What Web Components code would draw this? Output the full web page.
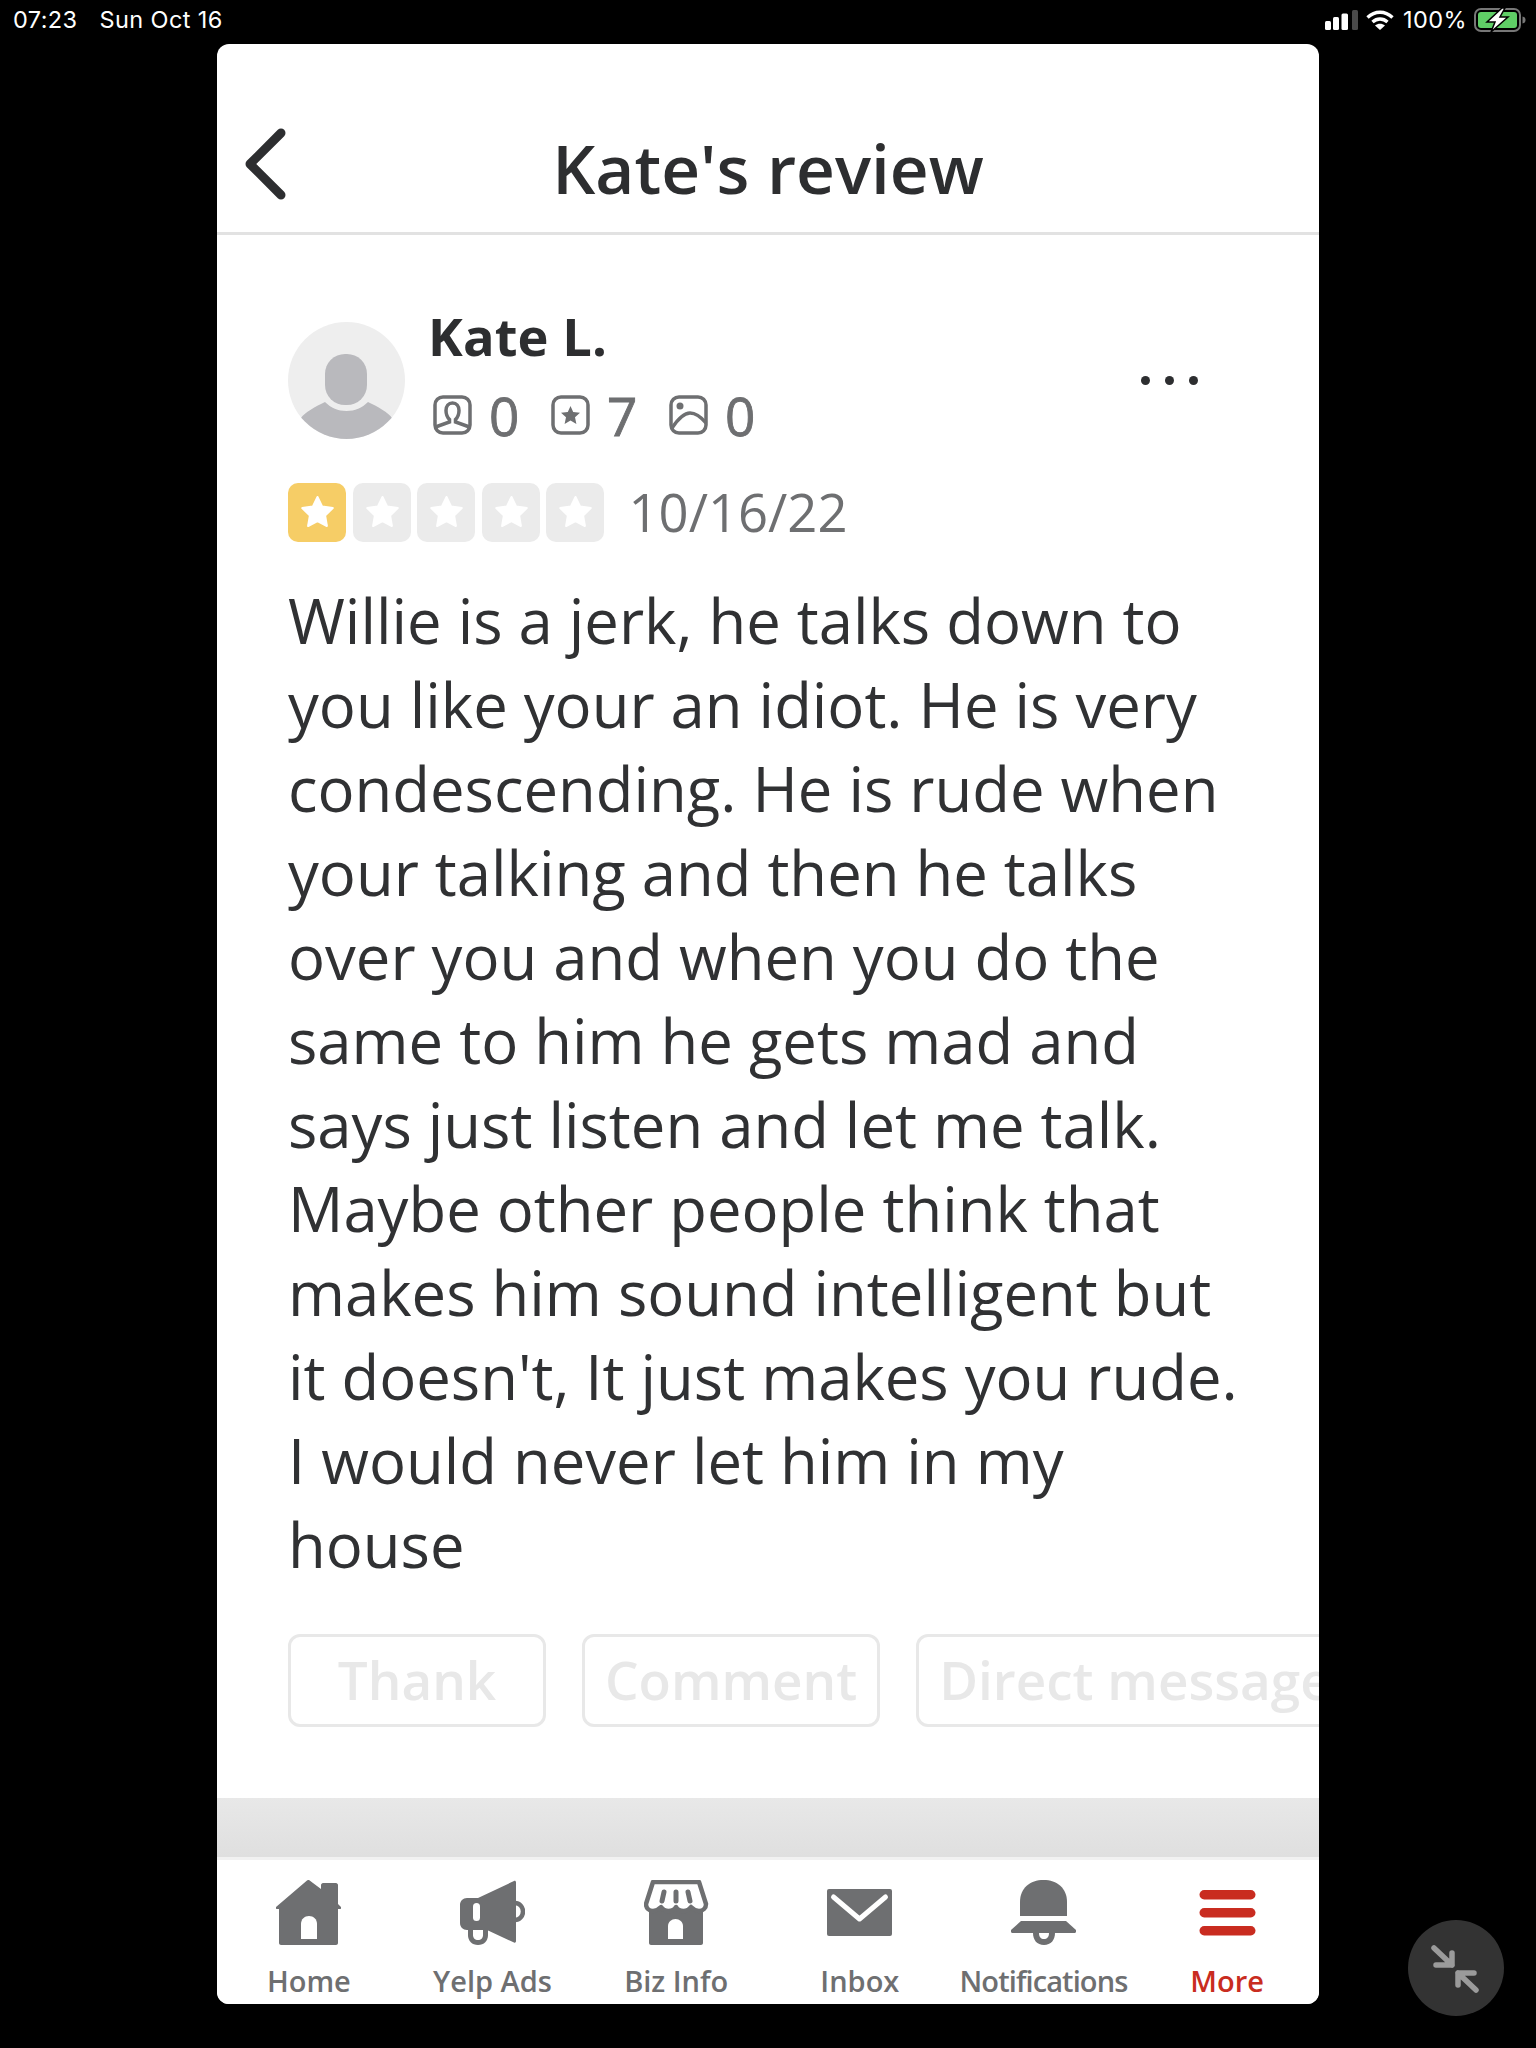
<!DOCTYPE html>
<html lang="en"><head><meta charset="utf-8"><title>Kate's review</title>
<style>
html,body{margin:0;background:#000;height:2048px;overflow:hidden}
body{font-family:"Open Sans",sans-serif;position:relative}
</style></head><body>
<app-shell>
  <status-bar slot="status"></status-bar>
  <review-header slot="card">Kate's review</review-header>
  <review-body slot="card">
    <reviewer-info name="Kate L."></reviewer-info>
    <star-rating date="10/16/22"></star-rating>
    <review-text>Willie is a jerk, he talks down to<br>you like your an idiot. He is very<br>condescending. He is rude when<br>your talking and then he talks<br>over you and when you do the<br>same to him he gets mad and<br>says just listen and let me talk.<br>Maybe other people think that<br>makes him sound intelligent but<br>it doesn't, It just makes you rude.<br>I would never let him in my<br>house</review-text>
    <action-row>
      <action-button style="min-width:258px">Thank</action-button>
      <action-button style="min-width:297px">Comment</action-button>
      <action-button>Direct message</action-button>
    </action-row>
  </review-body>
  <section-band slot="card"></section-band>
  <nav-bar slot="card">
    <nav-item label="Home" icon="home"></nav-item>
    <nav-item label="Yelp Ads" icon="ads"></nav-item>
    <nav-item label="Biz Info" icon="biz"></nav-item>
    <nav-item label="Inbox" icon="inbox"></nav-item>
    <nav-item label="Notifications" icon="bell"></nav-item>
    <nav-item label="More" icon="more" active></nav-item>
  </nav-bar>
</app-shell>
<float-button></float-button>
<script>
function def(name, html){
  customElements.define(name, class extends HTMLElement{
    constructor(){super();this.attachShadow({mode:'open'});}
    connectedCallback(){ this.shadowRoot.innerHTML = typeof html==='function'?html(this):html; }
  });
}
def('app-shell',`<style>:host{display:block;width:1536px;height:2048px}
.card{margin-left:217px;width:1102px;height:1960px;background:#fff;border-radius:12px;overflow:hidden;display:flex;flex-direction:column}</style>
<slot name="status"></slot><div class="card"><slot name="card"></slot></div>`);

def('status-bar',`<style>:host{display:flex;align-items:center;height:44px;padding:0 10px 5px 13px;box-sizing:border-box;color:#fff;font:400 23.5px/1 Inter,"Liberation Sans",sans-serif;letter-spacing:.4px}
.d{margin-left:22px}.sp{flex:1}svg{display:block}.pct{margin:0 7px 0 9px}.w{margin-left:8px}</style>
<span>07:23</span><span class="d">Sun Oct 16</span><span class="sp"></span>
<svg width="33" height="20" viewBox="0 0 33 20"><g fill="#fff"><rect x="0" y="11" width="6" height="9" rx="1.5"/><rect x="8" y="7" width="6" height="13" rx="1.5"/><rect x="16.500" y="3.500" width="6.500" height="16.500" rx="1.500"/></g><rect x="27" y="0" width="6" height="20" rx="1.500" fill="#4a4a4a"/></svg>
<svg class="w" width="28" height="20" viewBox="0 0 28 20" fill="none" stroke="#fff" stroke-width="3.400"><path d="M1.500 7.500C9 .5 19 .5 26.500 7.500"/><path d="M6.500 12c4.500-4 10.500-4 15 0"/><path d="M14 20l-5-4.500c3-2.300 7-2.300 10 0z" fill="#fff" stroke="none"/></svg>
<span class="pct">100%</span>
<svg width="52" height="24" viewBox="0 0 52 24"><rect x="1" y="1" width="45" height="22" rx="6" fill="none" stroke="#777" stroke-width="2"/><rect x="4" y="4" width="39" height="16" rx="3" fill="#5fce66"/><path d="M48.500 8.500c2 .3 3 1.500 3 3.500s-1 3.200-3 3.500z" fill="#777"/><path d="M28 0L13 14h8l-4 10 17-15h-8l5-9z" fill="#fff" stroke="#000" stroke-width="1.500"/></svg>`);

def('review-header',`<style>:host{display:grid;grid-template-columns:1fr auto 1fr;align-items:center;height:137px;padding-top:51px;border-bottom:3px solid #e2e2e2;flex:none;color:#2d2e30}
svg{margin:0 0 0 27px;display:block}
h1{margin:10px 0 0;font:600 67.5px/1 "Open Sans",sans-serif}</style>
<svg width="44" height="72" viewBox="0 0 44 72" fill="none" stroke="#2d2e30" stroke-width="9" stroke-linecap="round" stroke-linejoin="round"><path d="M37 5L6 36l31 31"/></svg><h1><slot></slot></h1><span></span>`);

def('review-body',`<style>:host{display:block;height:1563px;flex:none;padding:87px 0 0 71px;box-sizing:border-box;overflow:hidden;color:#2d2e30}</style><slot></slot>`);

const statIcons={
 friend:`<rect x="2" y="2" width="35" height="36" rx="8"/><path d="M19.500 8c-4 0-6.500 3-6.500 7.500 0 4 1.500 7 3.500 9v2.500l-14 5M19.500 8c4 0 6.500 3 6.500 7.500 0 4-1.500 7-3.500 9v2.500l14 5"/>`,
 star:`<rect x="2" y="2" width="35" height="36" rx="8"/><path d="M19.500 11l2.700 6 6.800.7-5 4.600 1.400 6.700-5.900-3.400-5.900 3.400 1.400-6.700-5-4.600 6.800-.7z" fill="#6e6f71" stroke="none"/>`,
 photo:`<rect x="2" y="2" width="35" height="36" rx="8"/><circle cx="11" cy="11" r="3.500" fill="#6e6f71" stroke="none"/><path d="M3 33C9 24 15 18 21 18c6 0 11 4 16 10"/>`};
def('reviewer-info',h=>`<style>:host{display:flex;height:117px}
.av{width:117px;height:117px;flex:none;margin-right:23px}
.n{font:700 52.4px/1 "Open Sans",sans-serif;color:#2d2e30;margin-top:-12px;height:83px;letter-spacing:.1px}
.s{display:flex;align-items:center;font:400 53px/1 "Open Sans",sans-serif;-webkit-text-stroke:.9px #6e6f71;color:#6e6f71;height:44px;margin-left:5px}
.s svg{margin-right:17px;flex:none}.s span{margin-right:33px;width:29px}
.dots{margin-left:auto;margin-right:121px;margin-top:54px;align-self:flex-start;display:flex;gap:15px}.dots i{width:9px;height:9px;border-radius:50%;background:#2d2e30}</style>
<svg class="av" viewBox="0 0 117 117"><defs><clipPath id="c"><circle cx="58.500" cy="58.500" r="58.500"/></clipPath></defs><circle cx="58.500" cy="58.500" r="58.500" fill="#eee"/><g clip-path="url(#c)" fill="#b9b9bd"><rect x="37" y="32" width="42" height="51" rx="20"/><path d="M13 96c3-5 15-12 24-16 6 6 13 9 21.500 9s15.500-3 21.500-9c9 4 21 11 24 16v25H13z"/></g></svg>
<div><div class="n">${h.getAttribute('name')}</div>
<div class="s">
<svg width="39" height="40" viewBox="0 0 39 40" fill="none" stroke="#6e6f71" stroke-width="3.5">${statIcons.friend}</svg><span>0</span>
<svg width="39" height="40" viewBox="0 0 39 40" fill="none" stroke="#6e6f71" stroke-width="3.5">${statIcons.star}</svg><span>7</span>
<svg width="39" height="40" viewBox="0 0 39 40" fill="none" stroke="#6e6f71" stroke-width="3.5">${statIcons.photo}</svg><span>0</span>
</div></div>
<div class="dots"><i></i><i></i><i></i></div>`);

const starPath='M29.500 14l4.700 9.600 10.600 1.500-7.700 7.400 1.800 10.500-9.400-5-9.400 5 1.800-10.500-7.700-7.400 10.600-1.500z';
def('star-rating',h=>`<style>:host{display:flex;align-items:center;margin-top:44px;height:59px}
svg{width:58px;height:59px;margin-right:6.500px;flex:none}
span{font:400 52.6px/1 "Open Sans",sans-serif;color:#6e6f71;margin-left:18px}</style>
${[0,1,2,3,4].map(i=>`<svg viewBox="0 0 58 59"><rect width="58" height="59" rx="10" fill="${i?'#ebebeb':'#f6cd66'}"/><path d="${starPath}" fill="#fff" stroke="#fff" stroke-width="2" stroke-linejoin="round"/></svg>`).join('')}
<span>${h.getAttribute('date')}</span>`);

def('review-text',`<style>:host{display:block;margin-top:36px;font:400 61.6px/84px "Open Sans",sans-serif;color:#303133}</style><slot></slot>`);
def('action-row',`<style>:host{display:flex;gap:36px;margin-top:48px;width:1200px}</style><slot></slot>`);
def('action-button',`<style>:host{display:flex;align-items:center;justify-content:center;box-sizing:border-box;height:93px;padding:0 20px 2px;border:3px solid #e8e8e8;border-radius:12px;font:600 53px/1 "Open Sans",sans-serif;color:#e8e8e8;white-space:nowrap;flex:none}</style><slot></slot>`);
def('section-band',`<style>:host{display:block;height:62px;flex:none;box-sizing:border-box;background:linear-gradient(#e8e8e8,#dfdfdf);border-bottom:3px solid #f1f1f1}</style>`);
def('nav-bar',`<style>:host{display:grid;grid-template-columns:repeat(6,1fr);flex:1;background:#fff}</style><slot></slot>`);

const icons={
home:`<path d="M33 0l12 9V5c0-1 1-2 2-2h13c1 0 2 1 2 2v19l3 3c.5 1 0 2-1 2h-2v34c0 1-1 2-2 2H5c-1 0-2-1-2-2V29H1c-1 0-1.500-1-1-2L31 .5c.7-.5 1.300-.5 2-.5z"/><path d="M25 59V44c0-5 3.500-8 8-8s8 3 8 8v15z" fill="#fff"/>`,
ads:`<path d="M18 18l36-17c1-.5 2 0 2 1.500V61c0 1.500-1 2-2 1.500L27 50H7c-4 0-7-3-7-7V25c0-4 3-7 7-7z"/><rect x="13" y="23" width="7" height="18" rx="3.500" fill="#fff"/><path d="M8 43h20v12c0 6-4 10-10 10S8 61 8 55z"/><path d="M13 50h10v5c0 3-2 5-5 5s-5-2-5-5z" fill="#fff"/><path d="M55 23a8 8.500 0 0 1 0 17" fill="none" stroke="#6e6f71" stroke-width="4.500"/>`,
biz:`<path d="M5 27h54v36c0 1-1 2-2 2H7c-1 0-2-1-2-2z"/><path d="M9 2h46l7 22c0 4-3 7-7 7s-6-2-8-4c-2 3-4 4-7.500 4S33 29 32 27c-1 2-4 4-7.500 4S19 30 17 27c-2 2-4 4-8 4s-7-3-7-7z" fill="#fff" stroke="#6e6f71" stroke-width="4.500" stroke-linejoin="round"/><path d="M20 12l-2 9M32 12v9M44 12l2 9" stroke="#6e6f71" stroke-width="5" stroke-linecap="round" fill="none"/><path d="M24 59V46c0-4 3.500-7 7.500-7s7.500 3 7.500 7v13z" fill="#fff"/>`,
inbox:`<rect y="9" width="65" height="47" rx="2"/><path d="M6.500 17l26 22 26-22" fill="none" stroke="#fff" stroke-width="5" stroke-linecap="round" stroke-linejoin="round"/>`,
bell:`<path d="M9 36V22C9 8 19 0 32.500 0S56 8 56 22v14z"/><path d="M10 41h45l10 9c.5 1.500 0 3-2 3H2c-2 0-2.500-1.500-2-3z"/><path d="M22 53c0 7 4 12 11 12s11-5 11-12h-6c0 4-2 6-5 6s-5-2-5-6z"/>`,
more:`<g fill="#c92c20"><rect x="4.500" y="10" width="56" height="9.500" rx="4.700"/><rect x="4.500" y="28" width="56" height="9.500" rx="4.700"/><rect x="4.500" y="46" width="56" height="9.500" rx="4.700"/></g>`};
def('nav-item',h=>`<style>:host{display:flex;flex-direction:column;align-items:center;padding-top:20px;color:${h.hasAttribute('active')?'#c92c20':'#6e6f71'}}
svg{width:65px;height:65px;display:block;fill:#6e6f71}
span{font:600 29px/1 "Open Sans",sans-serif;margin-top:21px;white-space:nowrap}
:host([label="Notifications"]) span{letter-spacing:-.9px}</style>
<svg viewBox="0 0 65 65">${icons[h.getAttribute('icon')]}</svg><span>${h.getAttribute('label')}</span>`);

def('float-button',`<style>:host{position:absolute;left:1408px;top:1920px;width:96px;height:96px;border-radius:50%;background:#333;display:block}svg{display:block}</style>
<svg width="96" height="96" viewBox="0 0 96 96" fill="none" stroke="#9b9b9b" stroke-width="5.500" stroke-linecap="round" stroke-linejoin="round"><path d="M26 28l18 17M44 33v12H28M68 70L50 53M50 65V53h16"/></svg>`);
</script>
</body></html>
